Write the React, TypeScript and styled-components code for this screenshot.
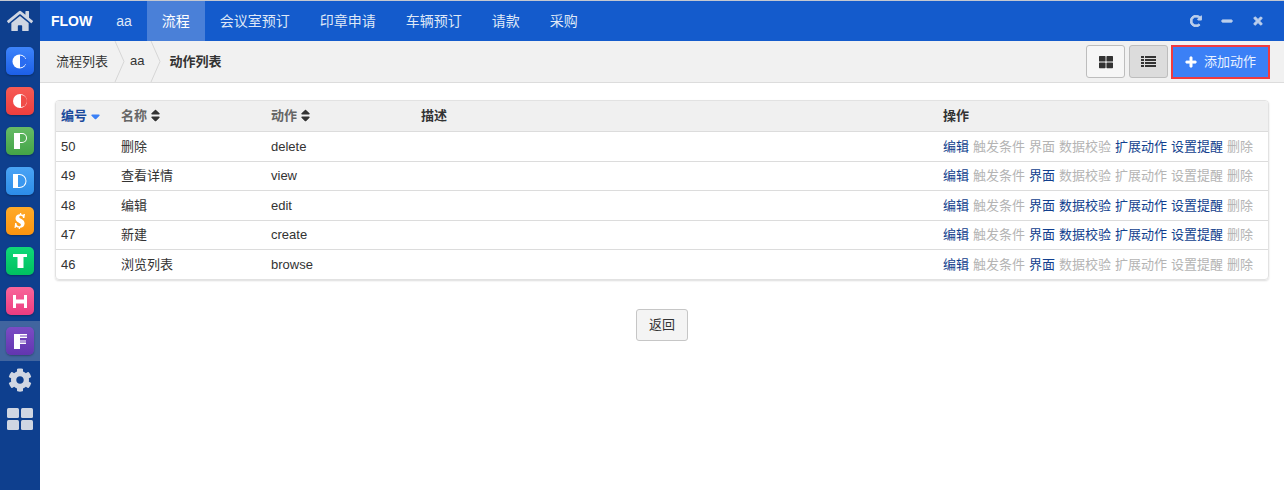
import React from "react";
import styled, { createGlobalStyle } from "styled-components";
import { FaHome, FaCog, FaThLarge, FaPlus, FaSort, FaSortDown, FaMinus, FaTimes, FaRedoAlt } from "react-icons/fa";

const GlobalStyle = createGlobalStyle`
  html, body {
    margin: 0;
    padding: 0;
    height: 100%;
    background: #fff;
    font-family: "Liberation Sans", "Noto Sans CJK SC", sans-serif;
    font-size: 13px;
    color: #333;
  }
  * { box-sizing: border-box; }
`;

const Page = styled.div`
  display: flex;
  width: 1284px;
  height: 490px;
  overflow: hidden;
  border-top: 1px solid #c4c8d0;
`;

const Sidebar = styled.aside`
  width: 40px;
  flex: none;
  background: #0e3f8e;
  display: flex;
  flex-direction: column;
  align-items: center;
`;

const HomeSlot = styled.div`
  height: 40px;
  width: 40px;
  display: flex;
  align-items: center;
  justify-content: center;
  color: #d0d6e2;
  font-size: 26px;
`;

const AppSlot = styled.div<{ $active?: boolean }>`
  width: 40px;
  height: 40px;
  flex: none;
  display: flex;
  align-items: center;
  justify-content: center;
  background: ${(p) => (p.$active ? "#41659f" : "transparent")};
`;

const AppIcon = styled.div<{ $from: string; $to: string }>`
  width: 28px;
  height: 28px;
  border-radius: 5px;
  background: linear-gradient(${(p) => p.$from}, ${(p) => p.$to});
  box-shadow: 0 1px 2px rgba(0, 0, 0, 0.3);
  display: flex;
  align-items: center;
  justify-content: center;
`;

const ToolSlot = styled.div<{ $height: number }>`
  width: 40px;
  height: ${(p) => p.$height}px;
  flex: none;
  display: flex;
  align-items: center;
  justify-content: center;
  color: #d0d6e2;
  font-size: 24px;
`;

const Tiles = styled.div`
  display: grid;
  grid-template-columns: 12px 12px;
  grid-auto-rows: 10px;
  gap: 2px;
  span {
    background: #d0d6e2;
    border-radius: 1.5px;
  }
`;

const Main = styled.main`
  flex: 1;
  min-width: 0;
  display: flex;
  flex-direction: column;
`;

const TopBar = styled.nav`
  height: 40px;
  flex: none;
  background: #145bcc;
  display: flex;
  align-items: stretch;
  color: #dfe8f7;
  font-size: 14px;
`;

const Brand = styled.div`
  display: flex;
  align-items: center;
  padding: 0 9px 0 11px;
  font-size: 14px;
  font-weight: 700;
  color: #fff;
`;

const NavItem = styled.div<{ $active?: boolean; $latin?: boolean }>`
  display: flex;
  align-items: center;
  padding: 0 15px ${(p) => (p.$latin ? "0" : "2px")};
  background: ${(p) => (p.$active ? "#4a80d8" : "transparent")};
  color: ${(p) => (p.$active ? "#fff" : "#dfe8f7")};
`;

const WindowTools = styled.div`
  margin-left: auto;
  display: flex;
  align-items: center;
  gap: 19px;
  padding-right: 20px;
  color: #bccfec;
  font-size: 12px;
  svg {
    stroke: currentColor;
    stroke-width: 40;
  }
`;

const CrumbBar = styled.div`
  height: 42px;
  flex: none;
  background: #f1f1f1;
  border-bottom: 1px solid #dcdcdc;
  display: flex;
  align-items: center;
  padding-left: 16px;
  padding-right: 14px;
`;

const Crumb = styled.span<{ $current?: boolean }>`
  margin-bottom: 2px;
  margin-left: ${(p) => (p.$current ? "3px" : "0")};
  font-weight: ${(p) => (p.$current ? 700 : 400)};
  color: #333;
`;

const CrumbGap = styled.svg`
  width: 11px;
  height: 41px;
  margin: 0 5px 0 6px;
  flex: none;
`;

const CrumbActions = styled.div`
  margin-left: auto;
  display: flex;
  align-items: center;
  gap: 4px;
`;

const ViewButton = styled.button<{ $active?: boolean }>`
  width: 39px;
  height: 33px;
  padding: 0;
  border: 1px solid #bdbdbd;
  border-radius: 3px;
  background: ${(p) => (p.$active ? "#dcdcdc" : "#f6f6f6")};
  color: #333;
  font-size: 14px;
  display: flex;
  align-items: center;
  justify-content: center;
`;

const AddButton = styled.button`
  width: 99px;
  height: 34px;
  margin-left: -1px;
  border: 2px solid #f03a3f;
  background: #3b80f6;
  color: #eaf2ff;
  font-family: inherit;
  font-size: 13px;
  display: flex;
  align-items: center;
  justify-content: center;
  gap: 7px;
  padding: 0 0 3px 0;
  svg {
    margin-top: 4px;
    color: #fff;
    font-size: 12px;
    stroke: currentColor;
    stroke-width: 30;
  }
`;

const Content = styled.div`
  padding: 17px 15px 0 15px;
  display: flex;
  flex-direction: column;
  align-items: center;
`;

const Card = styled.div`
  width: 100%;
  border: 1px solid #e2e2e2;
  border-radius: 4px;
  box-shadow: 0 1px 2px rgba(0, 0, 0, 0.14);
  overflow: hidden;
`;

const Table = styled.table`
  width: 100%;
  border-collapse: collapse;
  table-layout: fixed;
`;

const Head = styled.th<{ $sorted?: boolean; $muted?: boolean; $w?: number }>`
  height: 30px;
  padding: 0 0 2px 5px;
  text-align: left;
  background: #f0f0f0;
  border-bottom: 1px solid #dcdcdc;
  font-size: 13px;
  font-weight: 700;
  width: ${(p) => (p.$w ? `${p.$w}px` : "auto")};
  color: ${(p) => (p.$sorted ? "#1a4a9c" : p.$muted ? "#666" : "#333")};
  svg {
    font-size: 15px;
    margin-left: 1px;
    vertical-align: -3px;
    color: #333;
  }
  &:first-child svg {
    color: #3b80f6;
    vertical-align: -1px;
  }
`;

const Row = styled.tr`
  &:nth-child(odd) td { height: 30px; }
  &:nth-child(even) td { height: 29px; }
`;

const Cell = styled.td<{ $cjk?: boolean }>`
  padding: 0 0 ${(p) => (p.$cjk ? "2px" : "0")} 5px;
  border-bottom: 1px solid #dcdcdc;
  font-size: 13px;
  color: #333;
  white-space: nowrap;
  tr:last-child & { border-bottom: none; }
`;

const OpLink = styled.a<{ $on: boolean }>`
  margin-right: 4px;
  font-size: 13px;
  color: ${(p) => (p.$on ? "#123f8e" : "#b4b4b4")};
`;

const BackRow = styled.div`
  margin-top: 29px;
`;

const BackButton = styled.button`
  width: 52px;
  height: 32px;
  padding: 0 0 3px;
  border: 1px solid #c6c6c6;
  border-radius: 3px;
  background: #f4f4f4;
  color: #333;
  font-family: inherit;
  font-size: 13px;
`;

const ops = ["编辑", "触发条件", "界面", "数据校验", "扩展动作", "设置提醒", "删除"];

const rows = [
  { id: 50, name: "删除", action: "delete", on: [0, 4, 5] },
  { id: 49, name: "查看详情", action: "view", on: [0, 2] },
  { id: 48, name: "编辑", action: "edit", on: [0, 2, 3, 4, 5] },
  { id: 47, name: "新建", action: "create", on: [0, 2, 3, 4, 5] },
  { id: 46, name: "浏览列表", action: "browse", on: [0, 2] },
];

const Mark = ({ children }: { children: React.ReactNode }) => (
  <svg width="18" height="18" viewBox="0 0 18 18">
    {children}
  </svg>
);

const ListGlyph = () => (
  <svg width="15" height="12" viewBox="0 0 15 12" fill="currentColor">
    {[0, 3, 6, 9].map((y) => (
      <g key={y}>
        <rect x="0" y={y} width="3" height="2" />
        <rect x="4" y={y} width="11" height="2" />
      </g>
    ))}
  </svg>
);

const apps = [
  {
    from: "#3d84fb",
    to: "#1c5fe8",
    mark: (
      <>
        <circle cx="8.500" cy="9.500" r="7" fill="#fff" />
        <path d="M9 3.500a6 6 0 0 1 0 12z" fill="#2a6cf0" />
        <rect x="14" y="7" width="2.500" height="5" fill="#2a6cf0" />
      </>
    ),
  },
  {
    from: "#f65b55",
    to: "#ee3e3e",
    mark: (
      <>
        <circle cx="9" cy="9" r="7" fill="#fff" />
        <path d="M10 3a6 6 0 0 1 0 12z" fill="#f04c48" />
      </>
    ),
  },
  {
    from: "#66bb66",
    to: "#43a447",
    mark: (
      <>
        <path d="M3 1h8a5 5 0 0 1 0 10H9v6H3z" fill="#fff" />
        <path d="M9 2h2a4 4 0 0 1 0 8H9z" fill="#55b058" />
      </>
    ),
  },
  {
    from: "#4aa3f5",
    to: "#2c8de8",
    mark: (
      <>
        <path d="M2 2h6.500a7 7 0 0 1 0 14H2z" fill="#fff" />
        <path d="M7 3h1.500a6 6 0 0 1 0 12H7z" fill="#3b98ef" />
      </>
    ),
  },
  {
    from: "#ffab2a",
    to: "#fb9410",
    mark: (
      <path
        d="M14 2l-.6 4h-1.400c0-1.500-1-2.200-2.200-2.200-1 0-1.600.6-1.600 1.300 0 2 5.400 2.200 5.400 6.300 0 2.800-2.200 4.200-4.400 4.300L9 17H7.600l.2-1.400c-1 0-2-.4-2.800-.9L4.500 16h-1l.6-5h1.300c0 2 1.200 3.200 2.700 3.200 1.100 0 1.800-.7 1.800-1.500 0-2.200-5.400-2.300-5.400-6.300 0-2.600 2-4 4.300-4.100L9 1h1.300l-.2 1.300c.8 0 1.500.3 2.100.7l.4-1z"
        fill="#fff"
      />
    ),
  },
  {
    from: "#10d878",
    to: "#00c060",
    mark: <path d="M2 2h14v3h-3.500v11h-6V5H2z" fill="#fff" />,
  },
  {
    from: "#f8659a",
    to: "#ec3c80",
    mark: <path d="M2 3h3v4.500h8V3h3v13h-3v-4.500H5V16H2z" fill="#fff" />,
  },
  {
    from: "#7c4cc4",
    to: "#6236b0",
    mark: (
      <>
        <path d="M3 2h13v4H9v2.500h6v3.500H9v5H3z" fill="#fff" />
        <path d="M9 3.500h7v1H9zM9 9.500h6v1H9z" fill="#6f42bb" />
      </>
    ),
  },
];

function App() {
  return (
    <>
      <GlobalStyle />
      <Page>
        <Sidebar>
          <HomeSlot>
            <FaHome />
          </HomeSlot>
          {apps.map((a, i) => (
            <AppSlot key={i} $active={i === 7}>
              <AppIcon $from={a.from} $to={a.to}>
                <Mark>{a.mark}</Mark>
              </AppIcon>
            </AppSlot>
          ))}
          <ToolSlot $height={38}>
            <FaCog />
          </ToolSlot>
          <ToolSlot $height={40}>
            <Tiles>
              <span />
              <span />
              <span />
              <span />
            </Tiles>
          </ToolSlot>
        </Sidebar>
        <Main>
          <TopBar>
            <Brand>FLOW</Brand>
            <NavItem $latin>aa</NavItem>
            <NavItem $active>流程</NavItem>
            <NavItem>会议室预订</NavItem>
            <NavItem>印章申请</NavItem>
            <NavItem>车辆预订</NavItem>
            <NavItem>请款</NavItem>
            <NavItem>采购</NavItem>
            <WindowTools>
              <FaRedoAlt />
              <FaMinus />
              <FaTimes />
            </WindowTools>
          </TopBar>
          <CrumbBar>
            <Crumb>流程列表</Crumb>
            <CrumbGap viewBox="0 0 11 41">
              <path d="M1 0l9 20.500L1 41" fill="none" stroke="#d6d6d6" />
            </CrumbGap>
            <Crumb>aa</Crumb>
            <CrumbGap viewBox="0 0 11 41">
              <path d="M1 0l9 20.500L1 41" fill="none" stroke="#d6d6d6" />
            </CrumbGap>
            <Crumb $current>动作列表</Crumb>
            <CrumbActions>
              <ViewButton>
                <FaThLarge />
              </ViewButton>
              <ViewButton $active>
                <ListGlyph />
              </ViewButton>
              <AddButton>
                <FaPlus />
                添加动作
              </AddButton>
            </CrumbActions>
          </CrumbBar>
          <Content>
            <Card>
              <Table>
                <thead>
                  <tr>
                    <Head $sorted $w={60}>
                      编号
                      <FaSortDown />
                    </Head>
                    <Head $muted $w={150}>
                      名称
                      <FaSort />
                    </Head>
                    <Head $muted $w={150}>
                      动作
                      <FaSort />
                    </Head>
                    <Head $w={522}>描述</Head>
                    <Head>操作</Head>
                  </tr>
                </thead>
                <tbody>
                  {rows.map((r) => (
                    <Row key={r.id}>
                      <Cell>{r.id}</Cell>
                      <Cell $cjk>{r.name}</Cell>
                      <Cell>{r.action}</Cell>
                      <Cell />
                      <Cell $cjk>
                        {ops.map((o, i) => (
                          <OpLink key={o} $on={r.on.includes(i)}>
                            {o}
                          </OpLink>
                        ))}
                      </Cell>
                    </Row>
                  ))}
                </tbody>
              </Table>
            </Card>
            <BackRow>
              <BackButton>返回</BackButton>
            </BackRow>
          </Content>
        </Main>
      </Page>
    </>
  );
}

export default App;
